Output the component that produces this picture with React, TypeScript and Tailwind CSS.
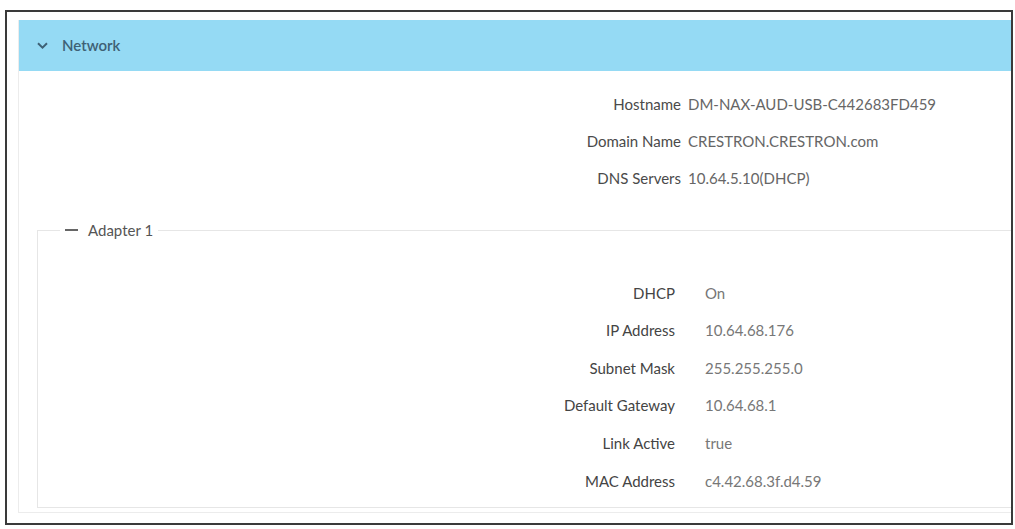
const network = [
  { label: "Hostname", value: "DM-NAX-AUD-USB-C442683FD459" },
  { label: "Domain Name", value: "CRESTRON.CRESTRON.com" },
  { label: "DNS Servers", value: "10.64.5.10(DHCP)" },
];

const adapter = [
  { label: "DHCP", value: "On" },
  { label: "IP Address", value: "10.64.68.176" },
  { label: "Subnet Mask", value: "255.255.255.0" },
  { label: "Default Gateway", value: "10.64.68.1" },
  { label: "Link Active", value: "true" },
  { label: "MAC Address", value: "c4.42.68.3f.d4.59" },
];

export default function App() {
  return (
    <div
      className="w-[1015px] h-[529px] bg-white pt-[10px] pl-[5px]"
      style={{ fontFamily: "Lato, 'Open Sans', sans-serif" }}
    >
      <div className="w-[1008px] h-[515px] border-2 border-[#3a3a3a] overflow-hidden pt-[8px] pl-[11px]">
        <div className="w-[1100px] border-l border-b border-[#ececec] pb-[4px]">
          {/* header */}
          <div className="h-[51px] bg-[#95daf4] flex items-center pl-[18px] gap-[14px]">
            <svg width="11" height="7" viewBox="0 0 11 7" fill="none">
              <path d="M1 1.3 L5.5 5.6 L10 1.3" stroke="#3e6175" strokeWidth="2" />
            </svg>
            <span className="text-[15px] font-semibold text-[#3e6175] leading-none">Network</span>
          </div>

          {/* top fields */}
          <div className="grid grid-cols-[662px_1fr] gap-x-[7px] pt-[15px] pb-[23px]">
            {network.map((r) => (
              <div key={r.label} className="contents">
                <div className="h-[37px] flex items-center justify-end text-[15px] text-[#4a4a4a]">{r.label}</div>
                <div className="h-[37px] flex items-center text-[15px] text-[#666]">{r.value}</div>
              </div>
            ))}
          </div>

          {/* adapter */}
          <fieldset className="ml-[18px] border border-[#e6e6e6] pb-[7px]">
            <legend className="ml-[22px] px-[5px] text-[15px] leading-[20px] text-[#555] flex items-center gap-[10px]">
              <span className="inline-block w-[13px] h-[1.5px] bg-[#666]" />
              <span>Adapter 1</span>
            </legend>
            <div className="grid grid-cols-[637px_1fr] gap-x-[30px] pt-[34px]">
              {adapter.map((r) => (
                <div key={r.label} className="contents">
                  <div className="h-[37.6px] flex items-center justify-end text-[15px] text-[#444]">{r.label}</div>
                  <div className="h-[37.6px] flex items-center text-[15px] text-[#777]">{r.value}</div>
                </div>
              ))}
            </div>
          </fieldset>
        </div>
      </div>
    </div>
  );
}
